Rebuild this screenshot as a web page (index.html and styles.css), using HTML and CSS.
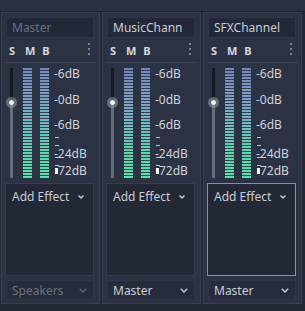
FILE: index.html
```html
<!DOCTYPE html>
<html lang="en">
    <head>
        <meta charset="UTF-8" />
        <title>Audio Buses</title>
        <link rel="stylesheet" href="styles.css">
    </head>

    <body>
        <div class="top-strip"></div>
        <div class="buses">
            <div class="bus">
                <div class="bus-name disabled">Master</div>
                <div class="bus-toggles">
                    <span>S</span><span>M</span><span>B</span>
                    <i class="dots"><b></b><b></b><b></b></i>
                </div>
                <div class="sep"></div>
                <div class="meter">
                    <div class="track"><div class="knob"></div></div>
                    <div class="bar"></div>
                    <div class="bar"></div>
                    <div class="scale">
                        <span class="lbl" style="top:-1px">-6dB</span>
                        <span class="lbl" style="top:25px">-0dB</span>
                        <span class="lbl" style="top:50px">-6dB</span>
                        <span class="tick" style="top:69px"></span>
                        <span class="tick" style="top:77px"></span>
                        <span class="lbl" style="top:79px">-24dB</span>
                        <span class="tick" style="top:89px"></span>
                        <span class="tick" style="top:97px"></span>
                        <span class="lbl pad" style="top:96px">72dB</span>
                        <span class="mark" style="top:100px"></span>
                    </div>
                </div>
                <div class="effects">
                    <div class="add-effect">Add Effect <svg width="6" height="4" viewBox="0 0 6 4"><polyline points="0.5,0.5 3,3 5.5,0.5" /></svg></div>
                </div>
                <div class="send disabled">Speakers <svg width="8" height="5" viewBox="0 0 8 5"><polyline points="0.8,0.8 4,4 7.2,0.8" /></svg></div>
            </div>

            <div class="bus">
                <div class="bus-name">MusicChann</div>
                <div class="bus-toggles">
                    <span>S</span><span>M</span><span>B</span>
                    <i class="dots"><b></b><b></b><b></b></i>
                </div>
                <div class="sep"></div>
                <div class="meter">
                    <div class="track"><div class="knob"></div></div>
                    <div class="bar"></div>
                    <div class="bar"></div>
                    <div class="scale">
                        <span class="lbl" style="top:-1px">-6dB</span>
                        <span class="lbl" style="top:25px">-0dB</span>
                        <span class="lbl" style="top:50px">-6dB</span>
                        <span class="tick" style="top:69px"></span>
                        <span class="tick" style="top:77px"></span>
                        <span class="lbl" style="top:79px">-24dB</span>
                        <span class="tick" style="top:89px"></span>
                        <span class="tick" style="top:97px"></span>
                        <span class="lbl pad" style="top:96px">72dB</span>
                        <span class="mark" style="top:100px"></span>
                    </div>
                </div>
                <div class="effects">
                    <div class="add-effect">Add Effect <svg width="6" height="4" viewBox="0 0 6 4"><polyline points="0.5,0.5 3,3 5.5,0.5" /></svg></div>
                </div>
                <div class="send">Master <svg width="8" height="5" viewBox="0 0 8 5"><polyline points="0.8,0.8 4,4 7.2,0.8" /></svg></div>
            </div>

            <div class="bus">
                <div class="bus-name">SFXChannel</div>
                <div class="bus-toggles">
                    <span>S</span><span>M</span><span>B</span>
                    <i class="dots"><b></b><b></b><b></b></i>
                </div>
                <div class="sep"></div>
                <div class="meter">
                    <div class="track"><div class="knob"></div></div>
                    <div class="bar"></div>
                    <div class="bar"></div>
                    <div class="scale">
                        <span class="lbl" style="top:-1px">-6dB</span>
                        <span class="lbl" style="top:25px">-0dB</span>
                        <span class="lbl" style="top:50px">-6dB</span>
                        <span class="tick" style="top:69px"></span>
                        <span class="tick" style="top:77px"></span>
                        <span class="lbl" style="top:79px">-24dB</span>
                        <span class="tick" style="top:89px"></span>
                        <span class="tick" style="top:97px"></span>
                        <span class="lbl pad" style="top:96px">72dB</span>
                        <span class="mark" style="top:100px"></span>
                    </div>
                </div>
                <div class="effects focused">
                    <div class="add-effect">Add Effect <svg width="6" height="4" viewBox="0 0 6 4"><polyline points="0.5,0.5 3,3 5.5,0.5" /></svg></div>
                </div>
                <div class="send">Master <svg width="8" height="5" viewBox="0 0 8 5"><polyline points="0.8,0.8 4,4 7.2,0.8" /></svg></div>
            </div>
        </div>
    </body>
</html>
```

FILE: styles.css
```css
body {
    margin: 0;
    background: #232937;
    font-family: 'Noto Sans', sans-serif;
    font-size: 12px;
    color: #c9ccd3;
    width: 305px;
    height: 311px;
    overflow: hidden;
}

.top-strip {
    height: 11px;
    background: #2a3142;
    border-bottom: 1px solid #20252f;
}

.buses {
    display: flex;
    gap: 2px;
    padding-left: 1px;
}

.bus {
    box-sizing: border-box;
    width: 99px;
    height: 292px;
    border: 1px solid #363e51;
    background: #2b3244;
    padding: 4px 3px 3px 3px;
    display: flex;
    flex-direction: column;
}

.bus-name {
    box-sizing: border-box;
    width: 88px;
    height: 21px;
    margin-left: 1px;
    background: #222837;
    border: 1px solid #2e3546;
    padding: 0 5px;
    line-height: 19px;
    white-space: nowrap;
    overflow: hidden;
}

.disabled {
    color: #697082;
}

.bus-toggles {
    display: flex;
    align-items: center;
    gap: 9px;
    height: 16px;
    margin-top: 4px;
    padding-left: 3px;
    font-size: 11px;
    font-weight: bold;
    color: #d5d8de;
    position: relative;
}

.bus-toggles span {
    width: 8px;
    text-align: center;
}

.dots {
    position: absolute;
    left: 83px;
    top: 1px;
    display: flex;
    flex-direction: column;
    gap: 3px;
}

.dots b {
    display: block;
    width: 2px;
    height: 2px;
    background: #7b8291;
}

.sep {
    height: 1px;
    margin-top: 4px;
    background: #394154;
}

.meter {
    display: flex;
    height: 114px;
    margin-top: 3px;
    padding-top: 2px;
    box-sizing: border-box;
}

.track {
    position: relative;
    width: 3px;
    height: 110px;
    margin-left: 5px;
    background: linear-gradient(to bottom, #151922 0 35px, #666c7a 35px);
}

.knob {
    position: absolute;
    left: -4px;
    top: 29px;
    width: 5px;
    height: 5px;
    border-radius: 50%;
    background: #f2f3f5;
    border: 3px solid rgba(150, 156, 170, 0.55);
    background-clip: padding-box;
}

.bar {
    width: 9px;
    height: 110px;
    margin-left: 10px;
    background:
        repeating-linear-gradient(to bottom, transparent 0 2px, rgba(37, 43, 58, 0.85) 2px 3px),
        linear-gradient(to bottom, #7487bd 0%, #7f9fc6 25%, #78b8c2 50%, #62d2b4 75%, #55e3ad 100%);
}

.bar + .bar {
    margin-left: 8px;
}

.scale {
    position: relative;
    flex: 1;
    margin-left: 5px;
}

.lbl {
    position: absolute;
    left: 0;
    line-height: 14px;
    white-space: nowrap;
    color: #d0d3d9;
}

.lbl.pad {
    left: 4px;
}

.tick {
    position: absolute;
    left: 1px;
    width: 4px;
    height: 1px;
    background: #c0c4cc;
}

.mark {
    position: absolute;
    left: 1px;
    width: 3px;
    height: 6px;
    background: #ffffff;
}

.effects {
    box-sizing: border-box;
    width: 89px;
    height: 93px;
    margin-top: 3px;
    background: #222836;
    border: 1px solid #353c4e;
}

.effects.focused {
    border-color: #8a909d;
}

.add-effect {
    display: flex;
    align-items: center;
    gap: 9px;
    padding: 6px 0 0 6px;
    line-height: 14px;
}

.add-effect svg polyline,
.send svg polyline {
    fill: none;
    stroke: #c9ccd3;
    stroke-width: 1.4;
}

.send {
    box-sizing: border-box;
    width: 88px;
    height: 20px;
    margin-top: 4px;
    margin-left: 1px;
    background: #262c3b;
    border: 1px solid #2e3546;
    padding: 0 6px 0 5px;
    display: flex;
    align-items: center;
    justify-content: space-between;
}

.send.disabled svg polyline {
    stroke: #5d6475;
}
```
